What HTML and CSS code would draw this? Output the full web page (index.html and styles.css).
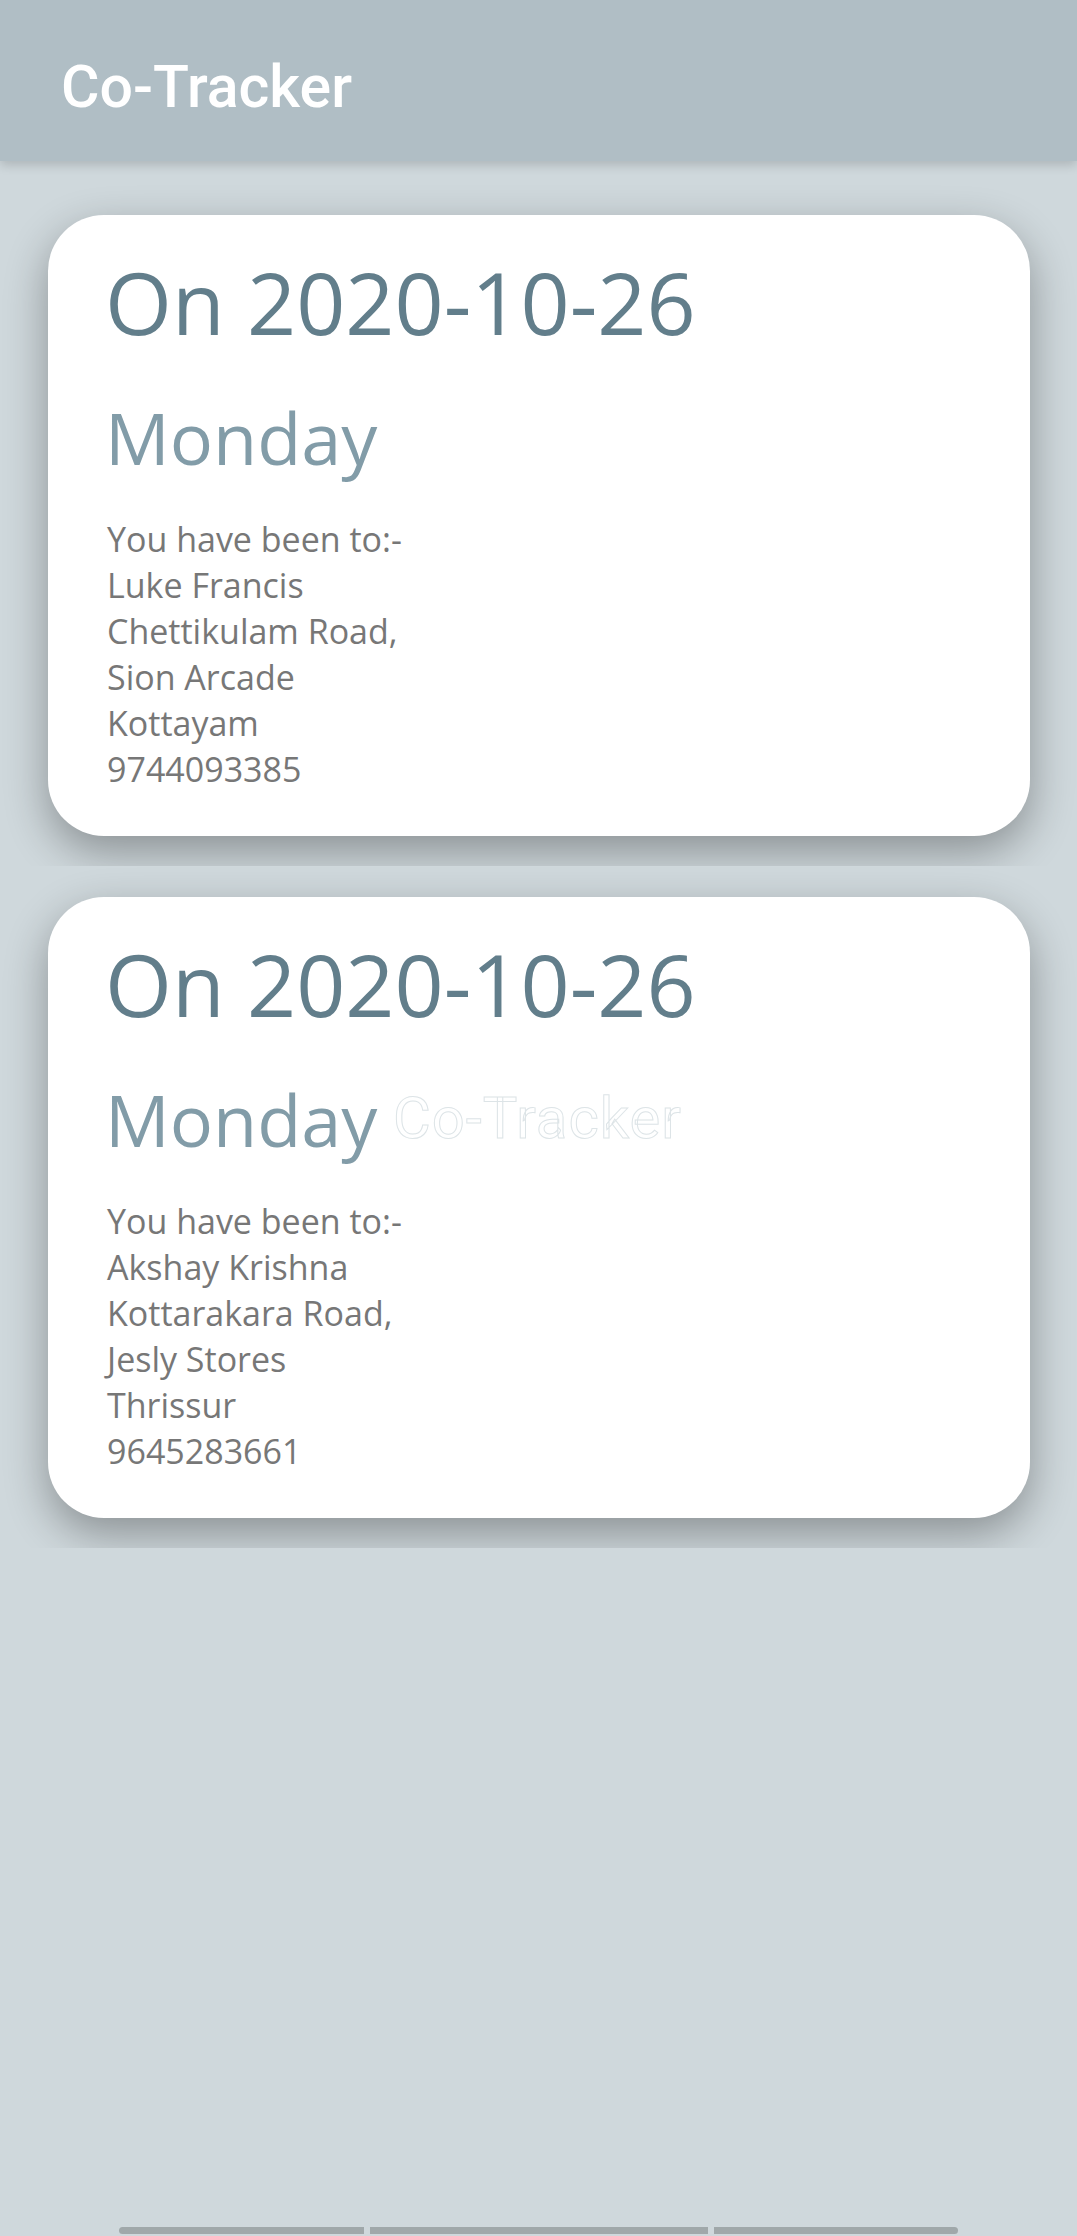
FILE: index.html
```html
<!DOCTYPE html>
<html lang="en">
<head>
<meta charset="utf-8">
<title>Co-Tracker</title>
<link rel="stylesheet" href="styles.css">
</head>
<body>
<div class="page">
  <header class="appbar">
    <h1 class="appbar-title">Co-Tracker</h1>
  </header>
  <main class="list">
    <section class="item">
      <article class="card">
        <h2 class="card-date">On 2020-10-26</h2>
        <h3 class="card-day">Monday</h3>
        <p class="card-body">You have been to:-<br>Luke Francis<br>Chettikulam Road,<br>Sion Arcade<br>Kottayam<br>9744093385</p>
      </article>
    </section>
    <section class="item">
      <article class="card">
        <h2 class="card-date">On 2020-10-26</h2>
        <h3 class="card-day">Monday</h3>
        <p class="card-body">You have been to:-<br>Akshay Krishna<br>Kottarakara Road,<br>Jesly Stores<br>Thrissur<br>9645283661</p>
        <span class="ghost-title">Co-Tracker</span>
      </article>
    </section>
  </main>
  <nav class="navbar">
    <span class="nav-seg nav-left"></span>
    <span class="nav-seg nav-mid"></span>
    <span class="nav-seg nav-right"></span>
  </nav>
</div>
</body>
</html>
```
FILE: styles.css
```css
html, body {
  margin: 0;
  padding: 0;
}
body {
  background: #cfd8dc;
  font-family: "Open Sans", "Noto Sans", sans-serif;
}
.page {
  min-height: 2236px;
  display: flex;
  flex-direction: column;
  overflow: hidden;
}
.appbar {
  position: relative;
  z-index: 2;
  height: 161px;
  box-sizing: border-box;
  padding: 52px 0 0 61px;
  background: #b0bec5;
  box-shadow: 0 4px 10px rgba(0, 0, 0, 0.16);
}
.appbar-title {
  margin: 0;
  font-family: Roboto, "Liberation Sans", sans-serif;
  font-weight: 500;
  font-size: 59px;
  line-height: 70px;
  color: #ffffff;
}
.list {
  padding-top: 23px;
}
.item {
  overflow: hidden;
  padding: 31px 47px 30px 48px;
}
.card {
  position: relative;
  height: 621px;
  box-sizing: border-box;
  padding: 35px 40px 0 57px;
  background: #ffffff;
  border-radius: 56px;
  box-shadow: 0 16px 44px rgba(0, 0, 0, 0.33);
}
.card-date {
  margin: 0;
  font-weight: 400;
  font-size: 86px;
  line-height: 104px;
  color: #627e8b;
}
.card-day {
  margin: 39px 0 0 0;
  font-weight: 400;
  font-size: 72px;
  line-height: 88px;
  color: #829ca8;
}
.card-body {
  margin: 35px 0 0 2px;
  font-size: 34px;
  line-height: 46px;
  color: #777777;
}
.ghost-title {
  position: absolute;
  left: 345px;
  top: 193px;
  font-family: Roboto, "Liberation Sans", sans-serif;
  font-weight: 400;
  font-size: 58px;
  line-height: 56px;
  letter-spacing: 1px;
  color: #ffffff;
  -webkit-text-stroke: 1px #dde4e7;
}
.navbar {
  margin-top: auto;
  display: flex;
  gap: 6px;
  padding: 0 119px 2px 119px;
}
.nav-seg {
  display: block;
  height: 7px;
  background: #a0a8aa;
}
.nav-left {
  width: 245px;
  border-radius: 4px 0 0 4px;
}
.nav-mid {
  width: 338px;
}
.nav-right {
  width: 244px;
  border-radius: 0 4px 4px 0;
}
```
